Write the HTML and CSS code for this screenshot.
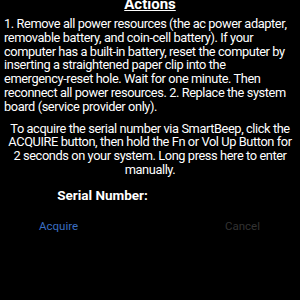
FILE: index.html
```html
<!DOCTYPE html>
<html>
<head>
    <title>Actions</title>
    <link rel="stylesheet" href="styles.css">
</head>
<body>
    <div class="screen">
        <h1 class="title">Actions</h1>
        <p class="steps">1. Remove all power resources (the ac power adapter, removable battery, and coin-cell battery). If your computer has a built-in battery, reset the computer by inserting a straightened paper clip into the <span class="nowrap">emergency-reset</span> hole. Wait for one minute. Then reconnect all power resources. 2. Replace the system board (service provider only).</p>
        <p class="hint">To acquire the serial number via SmartBeep, click the ACQUIRE button, then hold the Fn or Vol Up Button for 2 seconds on your system. Long press here to enter manually.</p>
        <div class="serial">
            <span class="serial-label">Serial Number:</span>
        </div>
        <div class="buttons">
            <button class="btn acquire">Acquire</button>
            <button class="btn cancel">Cancel</button>
        </div>
    </div>
</body>
</html>
```

FILE: styles.css
```css
body {
    margin: 0;
    background: #000;
    color: #fff;
    font-family: Roboto, "Noto Sans", sans-serif;
}
.screen {
    width: 300px;
    height: 300px;
    overflow: hidden;
}
.title {
    margin: -3px 0 0;
    font-size: 15px;
    font-weight: 700;
    text-align: center;
    text-decoration: underline;
    line-height: 14px;
}
.steps {
    margin: 6px 0 0;
    padding: 0 4px;
    font-size: 12.8px;
    letter-spacing: -0.4px;
    line-height: 13.8px;
}
.nowrap {
    white-space: nowrap;
}
.hint {
    margin: 8px 0 0;
    padding: 0 4px;
    font-size: 12.8px;
    letter-spacing: -0.4px;
    line-height: 13.8px;
    text-align: center;
}
.serial {
    width: 205px;
    margin-top: 8px;
    text-align: center;
}
.serial-label {
    font-size: 13.5px;
    font-weight: 700;
}
.buttons {
    display: flex;
    justify-content: space-between;
    padding: 0 40px 0 39px;
    margin-top: 15px;
}
.btn {
    background: none;
    border: none;
    padding: 0;
    font-family: inherit;
    font-size: 11.5px;
}
.acquire {
    color: #3b6fc2;
}
.cancel {
    color: #333;
}
```
